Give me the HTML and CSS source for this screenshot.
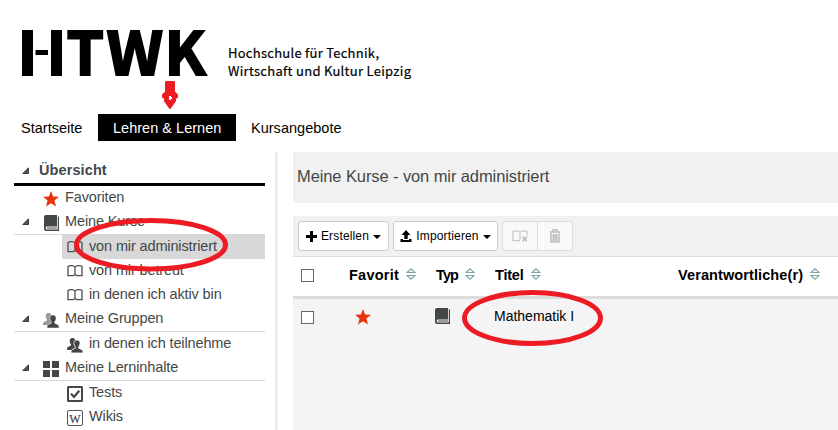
FILE: index.html
```
<!DOCTYPE html>
<html lang="de">
<head>
<meta charset="utf-8">
<title>Meine Kurse</title>
<link rel="stylesheet" href="styles.css">
</head>
<body>
<svg class="defs" width="0" height="0">
  <symbol id="star" viewBox="0 0 16 16"><path fill="#e8340c" d="M8 0l2.100 5.400 5.900.3-4.600 3.700L13 15.500 8 12.300l-5 3.200 1.600-6.100L0 5.700l5.900-.3z"/></symbol>
  <symbol id="book" viewBox="0 0 15 16"><path fill="#434747" d="M2 0H13V11.500H2.500C1.500 11.500 1.500 14.500 2.500 14.500H13.800V1.500H15V16H2C.5 16 0 15 0 13.500V2C0 .8.8 0 2 0z"/><path stroke="#434747" d="M3 13H13"/></symbol>
  <symbol id="open" viewBox="0 0 16 12"><path fill="none" stroke="#4b4f4f" stroke-width="1.300" d="M8 2C6.800.3 2.500.3 1 1.500V10M8 2C9.200.3 13.500.3 15 1.500V10M8 2V10M.3 10.600H6C7 9.500 9 9.500 10 10.600H15.700"/></symbol>
  <symbol id="person" viewBox="0 0 12 13"><path d="M6 0C8.300 0 9.300 1.500 9 3.700 8.900 5 8.300 6 7.700 6.700V8.200L11 9.700C12 10.300 12 11.500 12 13H0C0 11.500 0 10.300 1 9.700L4.300 8.200V6.700C3.600 6 3 5 3 3.700 2.700 1.500 3.700 0 6 0z"/></symbol>
  <symbol id="sort" viewBox="0 0 10 12"><path fill="none" stroke="#7fa5a5" stroke-width="1.100" d="M1 4.500L5 .8 9 4.500zM1 7.500L5 11.200 9 7.500z"/></symbol>
  <symbol id="tri" viewBox="0 0 7 7"><path fill="#555" stroke="#222" stroke-width=".8" d="M6.500.8V6.500H.8z"/></symbol>
</svg>

<header class="brand">
  <svg class="logo" width="200" height="74" viewBox="0 0 200 74">
    <path d="M1 2h11v46H1zM14.500 22H27v5H14.500zM30 2h11v46H30z"/>
    <text x="45.500" y="47" textLength="37.500" lengthAdjust="spacingAndGlyphs">T</text>
    <text x="85.500" y="47" textLength="56.500" lengthAdjust="spacingAndGlyphs">W</text>
    <text x="143.500" y="47" textLength="41.500" lengthAdjust="spacingAndGlyphs">K</text>
  </svg>
  <svg class="slogan" width="200" height="60">
    <text x="0" y="30" textLength="151">Hochschule für Technik,</text>
    <text x="0" y="48" textLength="183">Wirtschaft und Kultur Leipzig</text>
  </svg>
</header>

<nav class="tabs">
  <a class="tab">Startseite</a><a class="tab active">Lehren &amp; Lernen</a><a class="tab">Kursangebote</a>
</nav>

<div class="columns">
  <aside class="sidebar">
    <div class="row head"><svg class="tri"><use href="#tri"/></svg><b>Übersicht</b></div>
    <div class="row top"><svg class="tri"></svg><svg class="ico star"><use href="#star"/></svg><span>Favoriten</span></div>
    <div class="row top line"><svg class="tri"><use href="#tri"/></svg><svg class="ico book"><use href="#book"/></svg><span>Meine Kurse</span></div>
    <div class="row sub selected"><svg class="ico open"><use href="#open"/></svg><span>von mir administriert</span></div>
    <div class="row sub"><svg class="ico open"><use href="#open"/></svg><span>von mir betreut</span></div>
    <div class="row sub"><svg class="ico open"><use href="#open"/></svg><span>in denen ich aktiv bin</span></div>
    <div class="row top line"><svg class="tri"><use href="#tri"/></svg><svg class="ico group" viewBox="0 0 16 15"><use href="#person" width="11" height="12" fill="#999"/><use href="#person" x="4" y="2" width="12" height="13" fill="#434747" stroke="#fff" stroke-width=".5"/></svg><span>Meine Gruppen</span></div>
    <div class="row sub"><svg class="ico group" viewBox="0 0 16 15"><use href="#person" width="11" height="12" fill="#434747"/><use href="#person" x="4" y="2" width="12" height="13" fill="#434747" stroke="#fff" stroke-width=".8"/></svg><span>in denen ich teilnehme</span></div>
    <div class="row top line"><svg class="tri"><use href="#tri"/></svg><svg class="ico tiles" viewBox="0 0 16 16"><path fill="#434747" d="M0 0h7v7H0zM9 0h7v7H9zM0 9h7v7H0zM9 9h7v7H9z"/></svg><span>Meine Lerninhalte</span></div>
    <div class="row sub"><svg class="ico box" viewBox="0 0 16 16"><rect x="1" y="1" width="14" height="14" rx=".5" fill="#fff" stroke="#434747" stroke-width="2"/><path fill="none" stroke="#434747" stroke-width="2.200" d="M4 7.800L7 10.800 12.300 4.800"/></svg><span>Tests</span></div>
    <div class="row sub"><svg class="ico box" viewBox="0 0 16 16"><rect x=".5" y=".5" width="15" height="15" rx="1.500" fill="#fff" stroke="#555"/><text class="w" x="8" y="12.500" text-anchor="middle">W</text></svg><span>Wikis</span></div>
  </aside>

  <main class="content">
    <h1>Meine Kurse - von mir administriert</h1>
    <div class="toolbar">
      <button class="btn create"><svg width="11" height="11"><path stroke="#000" stroke-width="3" d="M5.500 0V11M0 5.500H11"/></svg><span>Erstellen</span><i class="caret"></i></button>
      <button class="btn import"><svg width="12" height="12"><path d="M6 0L10.500 5H7.700V9H4.300V5H1.500zM.5 9H3V10H9V9H11.500V12H.5z"/></svg><span>Importieren</span><i class="caret"></i></button>
      <div class="pair">
        <button class="off"><svg width="16" height="12" viewBox="0 0 16 12"><path fill="none" stroke="#c8c8c8" stroke-width="1.300" d="M8 2C6.500.5 2.500.5 1 1.500V10M8 2C9.500.5 13.500.5 15 1.500V5.500M8 2V10M.5 10.600H8"/><path stroke="#b8b8b8" stroke-width="1.600" d="M10.500 6.800L14.800 11.200M14.800 6.800L10.500 11.200"/></svg></button>
        <button class="off"><svg width="12" height="14" viewBox="0 0 12 14"><path fill="none" stroke="#bdbdbd" stroke-width="1.500" d="M.5 3H11.500M4 2.500V.8H8V2.500M2 4V13H10V4M4.300 5V12M6 5V12M7.700 5V12"/></svg></button>
      </div>
    </div>
    <div class="grid thead">
      <i class="check"></i>
      <span class="h-fav">Favorit<svg class="sort"><use href="#sort"/></svg></span>
      <span class="h-typ">Typ<svg class="sort"><use href="#sort"/></svg></span>
      <span class="h-title">Titel<svg class="sort"><use href="#sort"/></svg></span>
      <span class="h-resp">Verantwortliche(r)<svg class="sort"><use href="#sort"/></svg></span>
    </div>
    <div class="grid trow">
      <i class="check"></i>
      <svg class="fav"><use href="#star"/></svg>
      <svg class="typ"><use href="#book"/></svg>
      <span class="name">Mathematik I</span>
    </div>
  </main>
</div>

<svg class="marks" width="838" height="430">
  <g fill="none" stroke="#ed1c24" stroke-width="5">
    <ellipse cx="151" cy="244.700" rx="74.500" ry="24.300"/>
    <ellipse cx="532.500" cy="318" rx="68" ry="25.500"/>
  </g>
  <path fill="#ed1c24" stroke="#ed1c24" stroke-linejoin="round" stroke-width="2" d="M166 82H174V92L177 95V97L175 98V101L170 108 165 101V98L163 97V95L166 92z"/>
  <path fill="#fff" d="M169 96h2v1h1v2h-1v1h-2z"/>
</svg>
</body>
</html>
```
FILE: styles.css
```
* { box-sizing: border-box; }
body { margin: 0; width: 838px; height: 430px; overflow: hidden; position: relative; background: #fff; font-family: "Liberation Sans", Arial, sans-serif; font-size: 14.5px; color: #434747; }
svg { display: block; flex: none; }
.defs { position: absolute; }

.brand { display: flex; height: 114px; padding: 28px 0 0 21px; color: #000; }
.logo { overflow: visible; }
.logo text { font: 700 60px "Noto Sans CJK SC", sans-serif; stroke: #000; stroke-width: 2px; }
.slogan { margin-left: 7px; overflow: visible; }
.slogan text { font: 400 13px "Noto Sans CJK SC", sans-serif; stroke: #000; stroke-width: .2px; }

.tabs { display: flex; height: 38px; padding-left: 6px; color: #000; }
.tab { height: 27px; line-height: 28px; padding: 0 15px; white-space: nowrap; letter-spacing: .02px; }
.active { width: 138px; background: #000; color: #fff; }
.tab:first-child { width: 92px; }

.columns { display: flex; height: 278px; }
.sidebar { width: 278px; padding: 0 10px 0 14px; border-right: 3px solid #ededed; flex: none; }
.row { display: flex; height: 24px; line-height: 22px; white-space: nowrap; letter-spacing: -.13px; }
.row.head { height: 34px; line-height: 36px; border-bottom: 3px solid #000; letter-spacing: .1px; }
.head .tri { margin: 15px 10px 0 8px; }
.tri { width: 7px; height: 7px; margin: 8px 14px 0 8px; }
.row.line { height: 25px; border-bottom: 1px solid #d8d8d8; }
.row.sub { margin-left: 48px; padding-left: 5px; }
.selected { background: #d8d8d8; }
.ico { width: 16px; height: 16px; margin: 4px 6px 0 0; }
.ico.star { margin-top: 5px; }
.ico.book { width: 15px; margin-left: 1px; margin-top: 5px; }
.ico.open { height: 12px; margin-top: 6px; }
.ico.group { height: 15px; margin-top: 6px; }
.ico.tiles { margin-top: 5px; }
.ico.box { margin-top: 5px; }
.w { font: 12px "Liberation Serif", serif; letter-spacing: 0; fill: #434747; stroke: #434747; stroke-width: .2px; }

.content { flex: 1; margin-left: 15px; display: flex; flex-direction: column; }
h1 { margin: 0 0 13px; height: 51px; padding-left: 4px; background: #f1f1f1; font-size: 16.5px; font-weight: 400; line-height: 49px; letter-spacing: -.1px; }
.toolbar { display: flex; height: 41px; padding: 5px; background: #f1f1f1; border-bottom: 1px solid #ddd; }
.btn, .off { display: flex; align-items: center; justify-content: center; height: 30px; padding: 0; font: 12px "Liberation Sans", Arial, sans-serif; color: #000; }
.btn { border: 1px solid #ccc; border-radius: 3px; background: #fff; margin-right: 4px; gap: 4px; letter-spacing: .15px; }
.create { width: 91px; }
.import { width: 105px; }
.caret { border: 4px solid transparent; border-top-color: #000; border-bottom: 0; margin-top: 2px; }
.pair { display: flex; width: 71px; height: 30px; border: 1px solid #ddd; border-radius: 3px; background: #f9f9f9; }
.off { flex: 1; height: 28px; border: 0; background: none; }
.off + .off { border-left: 1px solid #ddd; }
.grid { display: grid; grid-template-columns: 56px 87px 59px 183px 1fr; }
.thead { height: 42px; border-bottom: 3px solid #dcdcdc; font-weight: 700; color: #000; line-height: 36px; }
.thead span { display: flex; white-space: nowrap; }
.h-fav { letter-spacing: .25px; }
.h-typ { letter-spacing: -.9px; }
.h-title { letter-spacing: -.2px; }
.h-resp { letter-spacing: .1px; }
.sort { width: 10px; height: 12px; margin: 11px 0 0 7px; }
.check { width: 13px; height: 13px; margin: 12px 0 0 8px; border: 1px solid #666; background: #fff; }
.trow { flex: 1; background: #f4f4f4; color: #000; }
.fav { width: 16px; height: 16px; margin: 10px 0 0 6px; }
.typ { width: 15px; height: 16px; margin: 9px 0 0 -1px; }
.name { line-height: 34px; margin-left: -1px; font-size: 14px; }
.marks { position: absolute; left: 0; top: 0; }
```
